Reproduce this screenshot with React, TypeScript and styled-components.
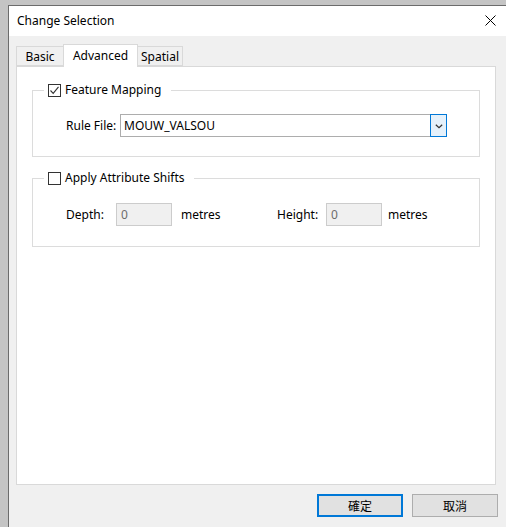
import React from 'react';
import styled, { createGlobalStyle } from 'styled-components';

const Global = createGlobalStyle`
  html, body { margin: 0; padding: 0; }
  body {
    background: #c4c4c4;
    font-family: "Noto Sans", "Noto Sans CJK TC", sans-serif;
    font-size: 12px;
    color: #000;
  }
`;

const Page = styled.div`
  width: 506px;
  height: 527px;
  overflow: hidden;
  box-sizing: border-box;
  padding: 5px 0 0 8px;
  background: #c4c4c4;
`;

const Window = styled.div`
  width: 498px;
  height: 530px;
  box-sizing: border-box;
  border-left: 1px solid #6b6b6b;
  border-top: 1px solid #6b6b6b;
  background: #f0f0f0;
  display: flex;
  flex-direction: column;
`;

const TitleBar = styled.div`
  height: 30px;
  flex: none;
  background: #fff;
  display: flex;
  align-items: center;
  justify-content: space-between;
  padding: 0 10px 1px 8px;
  box-sizing: border-box;
`;

const Title = styled.span`
  font-size: 12px;
  color: #000;
`;

const TabRow = styled.div`
  height: 30px;
  flex: none;
  display: flex;
  align-items: flex-end;
  padding-left: 7px;
  position: relative;
  z-index: 1;
`;

const Tab = styled.div<{ $w: number; $active?: boolean }>`
  width: ${p => p.$w}px;
  height: ${p => (p.$active ? 23 : 20)}px;
  box-sizing: border-box;
  border: 1px solid #d9d9d9;
  border-bottom: ${p => (p.$active ? 'none' : '1px solid #d9d9d9')};
  margin-bottom: ${p => (p.$active ? -1 : 0)}px;
  margin-left: ${p => (p.$active ? -1 : 0)}px;
  margin-right: ${p => (p.$active ? -1 : 0)}px;
  background: ${p => (p.$active ? '#fff' : '#f0f0f0')};
  position: relative;
  z-index: ${p => (p.$active ? 2 : 1)};
  display: flex;
  justify-content: center;
  align-items: ${p => (p.$active ? 'flex-start' : 'center')};
  padding-top: ${p => (p.$active ? 3 : 1)}px;
  font-size: 12px;
  line-height: 16px;
`;

const Panel = styled.div`
  margin-left: 7px;
  width: 480px;
  height: 419px;
  flex: none;
  box-sizing: border-box;
  border: 1px solid #d9d9d9;
  background: #fff;
  padding: 15px 0 0 15px;
`;

const Group = styled.fieldset<{ $top?: number; $bottom: number }>`
  margin: ${p => p.$top ?? 0}px 0 0 0;
  width: 448px;
  box-sizing: border-box;
  min-width: 0;
  border: 1px solid #dcdcdc;
  padding: 0 0 ${p => p.$bottom}px 11px;
`;

const Legend = styled.legend`
  display: flex;
  align-items: center;
  gap: 4px;
  padding: 0 10px 0 4px;
  height: 16px;
  line-height: 16px;
  font-size: 12px;
`;

const CheckBox = styled.span`
  width: 13px;
  height: 13px;
  box-sizing: border-box;
  border: 1px solid #333;
  background: #fff;
  display: inline-flex;
  align-items: center;
  justify-content: center;
`;

const Row = styled.div<{ $top: number }>`
  display: flex;
  align-items: center;
  margin: ${p => p.$top}px 0 0 22px;
  height: 23px;
`;

const Label = styled.span<{ $w: number }>`
  width: ${p => p.$w}px;
  flex: none;
  font-size: 12px;
`;

const Combo = styled.div`
  width: 327px;
  height: 23px;
  box-sizing: border-box;
  border: 1px solid #adadad;
  background: #fff;
  display: flex;
  align-items: stretch;
`;

const ComboText = styled.span`
  flex: 1;
  display: flex;
  align-items: center;
  padding-left: 3px;
  font-size: 12px;
`;

const ComboButton = styled.span`
  width: 17px;
  margin: -1px -1px -1px 0;
  box-sizing: border-box;
  border: 1px solid #0078d7;
  background: #e5f1fb;
  display: flex;
  align-items: center;
  justify-content: center;
  padding-top: 2px;
`;

const NumInput = styled.div`
  width: 56px;
  height: 23px;
  flex: none;
  box-sizing: border-box;
  border: 1px solid #cccccc;
  background: #f0f0f0;
  color: #6d6d6d;
  display: flex;
  align-items: center;
  padding-left: 4px;
  font-size: 12px;
`;

const Unit = styled.span<{ $w?: number; $gap: number }>`
  margin-left: ${p => p.$gap}px;
  width: ${p => (p.$w ? `${p.$w}px` : 'auto')};
  flex: none;
  font-size: 12px;
`;

const ButtonRow = styled.div`
  display: flex;
  justify-content: flex-end;
  gap: 9px;
  padding-right: 8px;
  margin-top: 9px;
`;

const Button = styled.button<{ $default?: boolean }>`
  width: 86px;
  height: 23px;
  box-sizing: border-box;
  border: ${p => (p.$default ? '2px solid #0078d7' : '1px solid #adadad')};
  background: #e1e1e1;
  font-family: "Noto Sans CJK TC", "Noto Sans", sans-serif;
  font-size: 12px;
  color: #000;
  padding: 0;
  display: flex;
  align-items: center;
  justify-content: center;
`;

const Check = () => (
  <svg width="11" height="11" viewBox="0 0 11 11">
    <path d="M1.5 5.5 L4.2 8.3 L9.5 1.8" fill="none" stroke="#333" strokeWidth="1.1" />
  </svg>
);

export default function App() {
  return (
    <>
      <Global />
      <Page>
        <Window>
          <TitleBar>
            <Title>Change Selection</Title>
            <svg width="11" height="11" viewBox="0 0 11 11">
              <path d="M0.5 0.5 L10.5 10.5 M10.5 0.5 L0.5 10.5" stroke="#000" strokeWidth="1" />
            </svg>
          </TitleBar>
          <TabRow>
            <Tab $w={48}>Basic</Tab>
            <Tab $w={75} $active>Advanced</Tab>
            <Tab $w={46}>Spatial</Tab>
          </TabRow>
          <Panel>
            <Group $bottom={19}>
              <Legend>
                <CheckBox><Check /></CheckBox>
                Feature Mapping
              </Legend>
              <Row $top={16}>
                <Label $w={54}>Rule File:</Label>
                <Combo>
                  <ComboText>MOUW_VALSOU</ComboText>
                  <ComboButton>
                    <svg width="8" height="5" viewBox="0 0 8 5">
                      <path d="M0.8 0.8 L4 3.8 L7.2 0.8" fill="none" stroke="#333" strokeWidth="1.2" />
                    </svg>
                  </ComboButton>
                </Combo>
              </Row>
            </Group>
            <Group $top={13} $bottom={20}>
              <Legend>
                <CheckBox />
                Apply Attribute Shifts
              </Legend>
              <Row $top={17}>
                <Label $w={50}>Depth:</Label>
                <NumInput>0</NumInput>
                <Unit $w={96} $gap={9}>metres</Unit>
                <Label $w={49}>Height:</Label>
                <NumInput>0</NumInput>
                <Unit $gap={6}>metres</Unit>
              </Row>
            </Group>
          </Panel>
          <ButtonRow>
            <Button $default>確定</Button>
            <Button>取消</Button>
          </ButtonRow>
        </Window>
      </Page>
    </>
  );
}
